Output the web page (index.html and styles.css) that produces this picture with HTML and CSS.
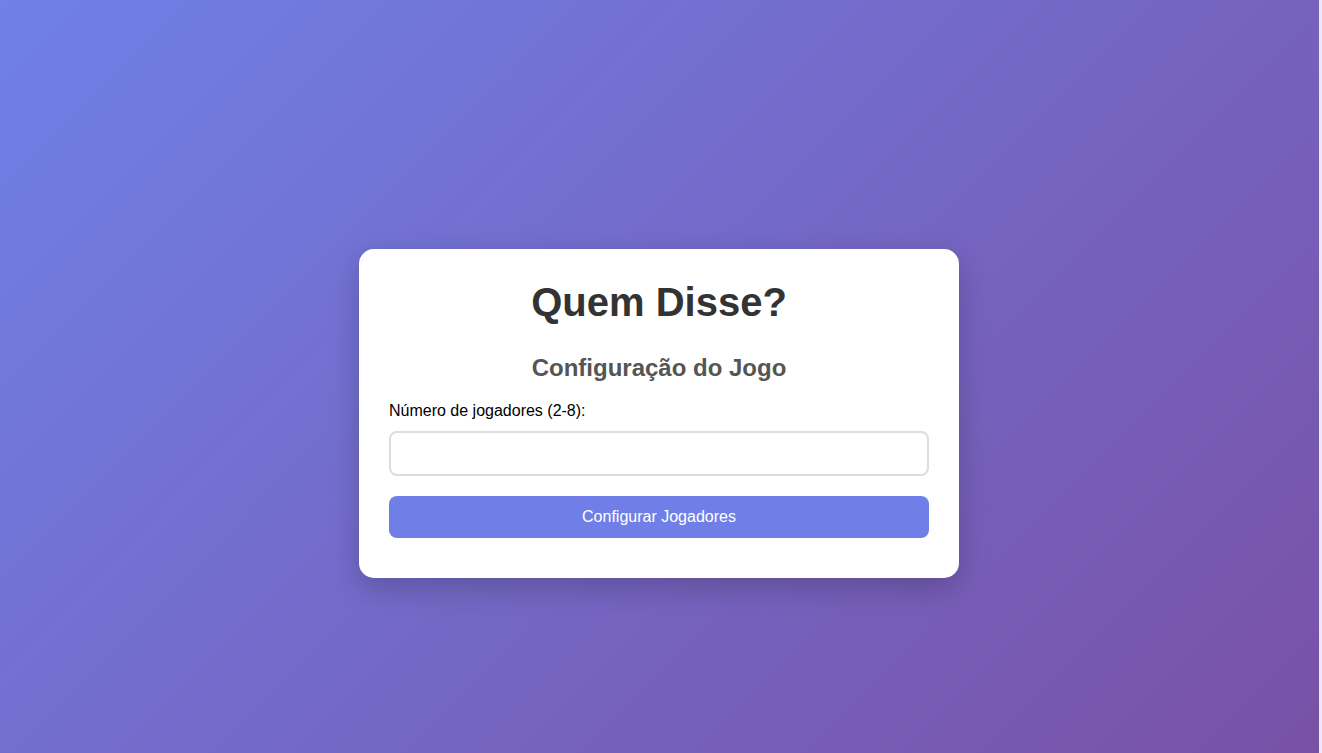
FILE: index.html
```html
<!DOCTYPE html>
<html lang="pt-BR">
<head>
<meta charset="utf-8">
<title>Quem Disse?</title>
<link rel="stylesheet" href="styles.css">
</head>
<body>
<main class="page">
  <section class="card">
    <h1 class="title">Quem Disse?</h1>
    <h2 class="subtitle">Configuração do Jogo</h2>
    <label class="label" for="num">Número de jogadores (2-8):</label>
    <input class="input" id="num" type="number" min="2" max="8">
    <button class="btn" type="button">Configurar Jogadores</button>
  </section>
</main>
</body>
</html>
```
FILE: styles.css
```css
html {
  margin: 0;
  padding: 0;
  background: #ecebf4;
}
body {
  margin: 0 3px 0 0;
  padding: 0;
  font-family: "Liberation Sans", Arial, sans-serif;
  background: linear-gradient(135deg, #6f80e7 0%, #7951a6 100%);
  min-height: 100vh;
}
.page {
  min-height: 100vh;
  box-sizing: border-box;
  padding: 74px 1px 0 0;
  display: flex;
  align-items: center;
  justify-content: center;
}
.card {
  width: 600px;
  box-sizing: border-box;
  background: #fff;
  border-radius: 15px;
  padding: 30px 30px 40px;
  box-shadow: 0 10px 30px rgba(0, 0, 0, 0.2);
  display: flex;
  flex-direction: column;
}
.title {
  margin: 0 0 29px;
  font-size: 40px;
  line-height: 46px;
  text-align: center;
  color: #333;
  font-weight: bold;
}
.subtitle {
  margin: 0 0 20px;
  font-size: 24px;
  line-height: 28px;
  text-align: center;
  color: #555;
  font-weight: bold;
}
.label {
  font-size: 16px;
  line-height: 18px;
  color: #000;
  margin-bottom: 11px;
}
.input {
  height: 45px;
  box-sizing: border-box;
  border: 2px solid #ddd;
  border-radius: 8px;
  padding: 10px;
  font-size: 16px;
  font-family: inherit;
  margin: 0 0 20px;
}
.btn {
  height: 42px;
  border: none;
  border-radius: 8px;
  background: #6f7fe7;
  color: #fff;
  font-size: 16px;
  font-family: inherit;
  cursor: pointer;
}
```
